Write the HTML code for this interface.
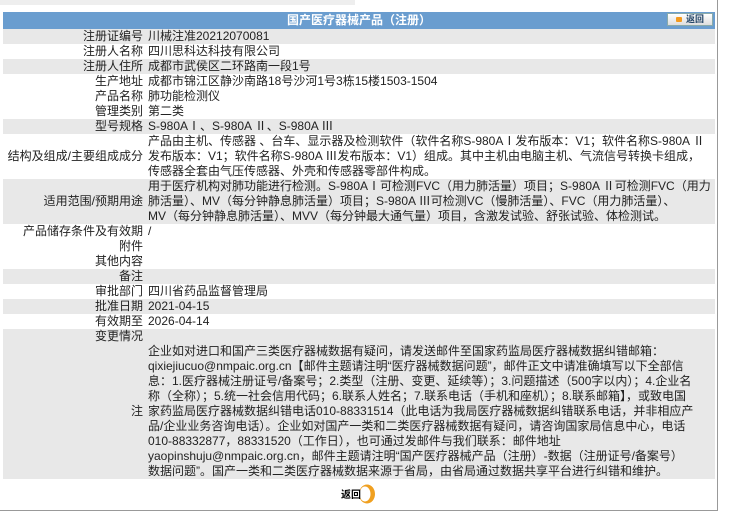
<!DOCTYPE html>
<html><head><meta charset="utf-8"><style>
body{margin:0;width:731px;height:516px;background:#fff;font-family:"Liberation Sans","Noto Sans CJK SC",sans-serif;font-size:12px;color:#222;position:relative;overflow:hidden}
.topg{position:absolute;left:0;top:0;width:355px;height:5px;background:#eee}
.rb{position:absolute;left:717px;top:0;width:1px;height:510px;background:#999}
.bb{position:absolute;left:0;top:510px;width:718px;height:1px;background:#999}
.hd{position:absolute;left:3px;top:12px;width:712px;height:17px;background:#6a9dcf;color:#fff;font-weight:bold;text-align:center;line-height:17px;font-size:12px}
.btn{position:absolute;left:667px;top:13px;width:46px;height:13px;background:linear-gradient(#fff,#ddd);border:1px solid #8aa;box-sizing:border-box;font-size:9px;color:#246;font-weight:bold;line-height:11px;text-align:right;padding-right:8px}
.btn:before{content:"";position:absolute;left:8px;top:3px;width:6px;height:5px;background:#f39a1e;border-radius:1px}
table{position:absolute;left:3px;top:29px;width:712px;border-collapse:collapse}
td{padding:0;line-height:15px;vertical-align:middle;white-space:nowrap}
td.l{width:140px;text-align:right;padding-right:5px}
td.v{padding-left:0}
tr.g{background:#e8e8e8}
.ret{position:absolute;left:340px;top:484px;width:40px;height:20px}
</style></head><body>
<div class="topg"></div><div class="rb"></div><div class="bb"></div>
<div class="hd">国产医疗器械产品（注册）</div>
<div class="btn">返回</div>
<table>
<tr class="g"><td class="l">注册证编号</td><td class="v">川械注准20212070081</td></tr>
<tr><td class="l">注册人名称</td><td class="v">四川思科达科技有限公司</td></tr>
<tr class="g"><td class="l">注册人住所</td><td class="v">成都市武侯区二环路南一段1号</td></tr>
<tr><td class="l">生产地址</td><td class="v">成都市锦江区静沙南路18号沙河1号3栋15楼1503-1504</td></tr>
<tr><td class="l">产品名称</td><td class="v">肺功能检测仪</td></tr>
<tr><td class="l">管理类别</td><td class="v">第二类</td></tr>
<tr class="g"><td class="l">型号规格</td><td class="v">S-980AⅠ、S-980A Ⅱ、S-980A Ⅲ</td></tr>
<tr><td class="l">结构及组成/主要组成成分</td><td class="v">产品由主机、传感器 、台车、显示器及检测软件（软件名称S-980AⅠ发布版本：V1；软件名称S-980A Ⅱ<br>发布版本：V1；软件名称S-980A Ⅲ发布版本：V1）组成。其中主机由电脑主机、气流信号转换卡组成，<br>传感器全套由气压传感器、外壳和传感器零部件构成。</td></tr>
<tr class="g"><td class="l">适用范围/预期用途</td><td class="v">用于医疗机构对肺功能进行检测。S-980AⅠ可检测FVC（用力肺活量）项目；S-980A Ⅱ可检测FVC（用力<br>肺活量）、MV（每分钟静息肺活量）项目；S-980A Ⅲ可检测VC（慢肺活量）、FVC（用力肺活量）、<br>MV（每分钟静息肺活量）、MVV（每分钟最大通气量）项目，含激发试验、舒张试验、体检测试。</td></tr>
<tr><td class="l">产品储存条件及有效期</td><td class="v">/</td></tr>
<tr><td class="l">附件</td><td class="v"></td></tr>
<tr><td class="l">其他内容</td><td class="v"></td></tr>
<tr class="g"><td class="l">备注</td><td class="v"></td></tr>
<tr><td class="l">审批部门</td><td class="v">四川省药品监督管理局</td></tr>
<tr class="g"><td class="l">批准日期</td><td class="v">2021-04-15</td></tr>
<tr><td class="l">有效期至</td><td class="v">2026-04-14</td></tr>
<tr class="g"><td class="l">变更情况</td><td class="v"></td></tr>
<tr class="g"><td class="l">注</td><td class="v">企业如对进口和国产三类医疗器械数据有疑问，请发送邮件至国家药监局医疗器械数据纠错邮箱：<br>qixiejiucuo@nmpaic.org.cn【邮件主题请注明“医疗器械数据问题”，邮件正文中请准确填写以下全部信<br>息：1.医疗器械注册证号/备案号；2.类型（注册、变更、延续等）；3.问题描述（500字以内）；4.企业名<br>称（全称）；5.统一社会信用代码；6.联系人姓名；7.联系电话（手机和座机）；8.联系邮箱】，或致电国<br>家药监局医疗器械数据纠错电话010-88331514（此电话为我局医疗器械数据纠错联系电话，并非相应产<br>品/企业业务咨询电话）。企业如对国产一类和二类医疗器械数据有疑问，请咨询国家局信息中心，电话<br>010-88332877，88331520（工作日），也可通过发邮件与我们联系：邮件地址<br>yaopinshuju@nmpaic.org.cn，邮件主题请注明“国产医疗器械产品（注册）-数据（注册证号/备案号）<br>数据问题”。国产一类和二类医疗器械数据来源于省局，由省局通过数据共享平台进行纠错和维护。</td></tr>
</table>
<svg class="ret" viewBox="0 0 40 20"><ellipse cx="27" cy="10" rx="8" ry="9.5" fill="#f0a020"/><ellipse cx="25" cy="10" rx="5.5" ry="7.5" fill="#fff"/><text x="1" y="14" font-size="10" font-weight="bold" fill="#000" font-family="Noto Sans CJK SC,sans-serif">返回</text></svg>
</body></html>
